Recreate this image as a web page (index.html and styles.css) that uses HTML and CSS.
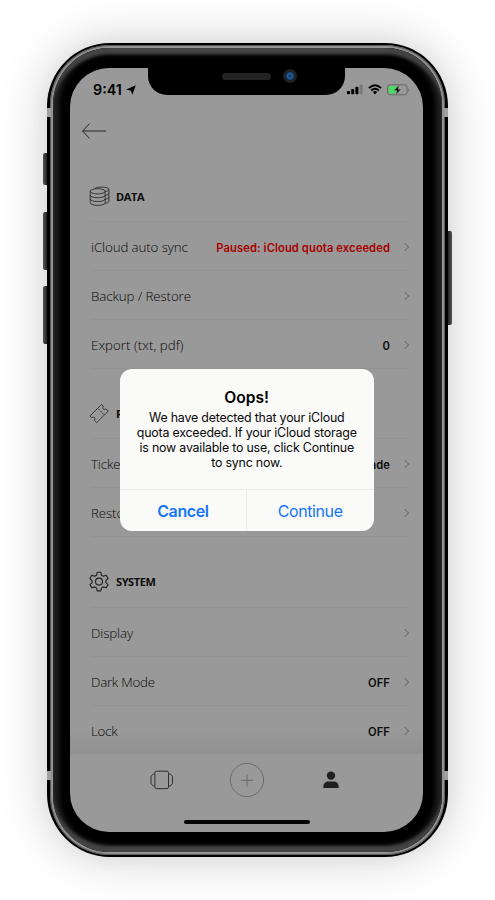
FILE: index.html
```html
<!DOCTYPE html>
<html lang="en">
<head>
<meta charset="utf-8">
<title>Settings</title>
<link rel="stylesheet" href="styles.css">
</head>
<body>
<div class="phone">
  <i class="key key-mute"></i><i class="key key-up"></i><i class="key key-down"></i><i class="key key-power"></i>
  <div class="rim"><div class="bezel"><div class="screen">
    <header class="status">
      <div class="clock"><span>9:41</span>
        <svg width="10" height="10" viewBox="0 0 10 10"><path d="M9.8.3 6.4 9.8 4.8 5.8.2 4.6z"/></svg>
      </div>
      <div class="signals">
        <svg width="16" height="11" viewBox="0 0 16 11"><rect y="7" width="3" height="3.3" rx=".8"/><rect x="4.2" y="5" width="3" height="5.3" rx=".8"/><rect x="8.4" y="2.8" width="3" height="7.5" rx=".8"/><rect x="12.6" y=".5" width="3" height="9.8" rx=".8" opacity=".2"/></svg>
        <svg width="14" height="11" viewBox="0 0 14 11" fill="none" stroke="#000" stroke-width="2"><path d="M.9 4.1Q7-1.7 13.1 4.1M3.2 6.4Q7 3 10.8 6.4"/><path d="M4.8 8Q7 6.2 9.2 8L7 10.5z" fill="#000" stroke="none"/></svg>
        <svg width="23" height="12" viewBox="0 0 23 12"><rect x=".5" y=".8" width="19.6" height="10" rx="2.6" fill="none" stroke="#666"/><path d="M21.4 4v3.8c1-.5 1.2-3 0-3.8z" fill="#666"/><rect x="1.8" y="2" width="8.5" height="7.6" rx="1.4" fill="#49d964"/><path d="M12.2.9 7 6.5h3L8.7 10.8 14 5.2h-3z" stroke="#999" stroke-width=".5"/></svg>
      </div>
    </header>
    <nav class="back"><svg width="24" height="16" viewBox="0 0 24 16"><path d="M7.5.5.7 8l6.8 7.5M.7 8H24"/></svg></nav>
    <main class="settings">
      <h2><svg width="21" height="21" viewBox="0 0 21 21"><ellipse cx="8.7" cy="5.3" rx="7.5" ry="2.6"/><path d="M1.2 5.3v11.4c0 3.6 15 3.6 15 0V5.3M1.2 9.1c0 3.5 15 3.5 15 0M1.2 12.9c0 3.5 15 3.5 15 0M5.5 3C7 .3 19.9.4 19.9 3.4c0 1-1.5 1.8-3.7 2.1M19.9 3.4v11.8c0 1-1.5 1.8-3.7 2.2M19.9 7.3c0 1-1.5 1.8-3.7 2.1M19.9 11.2c0 1-1.5 1.8-3.7 2.1"/></svg><span>DATA</span></h2>
      <div class="row"><span class="name">iCloud auto sync</span><b class="alerting">Paused: iCloud quota exceeded</b><i class="chev"></i></div>
      <div class="row"><span class="name">Backup / Restore</span><i class="chev"></i></div>
      <div class="row"><span class="name export">Export (txt, pdf)</span><b>0</b><i class="chev"></i></div>
      <h2><svg width="21" height="21" viewBox="0 0 21 21"><path d="M1 13 12.3 1.6l2 1.5c-1.2 2.8.2 4.2 2.7 2.8l2.3 2.2L7.7 19.6 5.5 17.5c1.2-2.8-.3-4.2-2.8-2.7z"/><path d="m9.3 5.8 6.2 6.4" stroke-dasharray="2 1"/></svg><span>P</span></h2>
      <div class="row"><span class="name">Tickets</span><b>Upgrade</b><i class="chev"></i></div>
      <div class="row"><span class="name">Restore</span><i class="chev"></i></div>
      <h2 class="system"><svg width="21" height="21" viewBox="0 0 21 21"><path d="M8.2 1.3h3.6l.7 3 1.7 1 3-1 1.9 3.2-2.2 2.1v2l2.2 2-1.9 3.2-3-.9-1.7 1-.7 3H8.2l-.7-3-1.7-1-3 .9-1.9-3.2 2.2-2v-2L.9 7.5l1.9-3.2 3 1 1.7-1z" stroke-linejoin="round" stroke-width="1.1"/><circle cx="10" cy="10.6" r="3.5" stroke-width="1.1"/></svg><span>SYSTEM</span></h2>
      <div class="row"><span class="name">Display</span><i class="chev"></i></div>
      <div class="row"><span class="name dark">Dark Mode</span><b>OFF</b><i class="chev"></i></div>
      <div class="row last"><span class="name dark">Lock</span><b>OFF</b><i class="chev"></i></div>
    </main>
    <footer class="tabs">
      <svg width="24" height="20" viewBox="0 0 24 20" fill="none" stroke="#303030"><rect x="4.9" y="1.2" width="13.6" height="17.4" rx="1.5"/><path d="M4.5 4H3.3L1 6.2v7.4L3.3 16h1.2M19 4h1.2l2.3 2.2v7.4L20.2 16H19"/></svg>
      <svg class="plus" width="36" height="36" viewBox="0 0 36 36" fill="none" stroke="#666"><circle cx="18" cy="18" r="16.6" stroke-width=".9"/><path d="M12 18.3h12M18 12.3v12"/></svg>
      <svg width="16" height="18" viewBox="0 0 16 18" fill="#202020"><circle cx="8" cy="4.6" r="4.2"/><path d="M.4 17v-1.8c0-3 2.5-4.8 4.5-4.8h6.2c2 0 4.5 1.8 4.5 4.8V17z"/></svg>
    </footer>
    <i class="home"></i>
    <div class="notch"><i class="speaker"></i><i class="camera"></i></div>
    <section class="dialog">
      <h1>Oops!</h1>
      <p><span>We have detected that your iCloud</span><span>quota exceeded. If your iCloud storage</span><span>is now available to use, click Continue</span><span>to sync now.</span></p>
      <div class="actions"><button class="strong">Cancel</button><button>Continue</button></div>
    </section>
  </div></div></div>
  <i class="band lt"></i><i class="band rt"></i><i class="band lb"></i><i class="band rb"></i>
</div>
</body>
</html>
```
FILE: styles.css
```css
* { box-sizing: border-box; }
body { margin: 0; height: 900px; padding: 43px 0 0 47px; background: #fff; overflow: hidden; font-family: Inter, "Liberation Sans", sans-serif; }
.phone { position: relative; width: 401px; height: 814px; padding: 2px 3px; border-radius: 63px; background: #000; box-shadow: 0 0 50px rgba(0,0,0,.2), 0 0 22px rgba(0,0,0,.04); }
.rim { height: 810px; padding: 3px; border-radius: 60px; background: #969696; box-shadow: inset 0 0 1px 1px #555; }
.bezel { height: 804px; padding: 20px 17px; border-radius: 57px; background: #000; box-shadow: inset 0 7px 3px -1px #444, inset 0 -7px 3px -1px #444, inset 0 0 5px 6px #202020; }
.screen { position: relative; display: flex; flex-direction: column; width: 353px; height: 764px; border-radius: 39px; overflow: hidden; background: #999; }
.key { position: absolute; left: -4px; width: 4px; border-radius: 2px 0 0 2px; background: linear-gradient(90deg, #555, #222); }
.key-mute { top: 110px; height: 32px; }
.key-up { top: 169px; height: 58px; }
.key-down { top: 243px; height: 58px; }
.key-power { left: 401px; top: 188px; height: 94px; border-radius: 0 2px 2px 0; background: linear-gradient(90deg, #222, #555); }
.band { position: absolute; width: 4px; height: 9px; background: #a0a0a0; }
.lt { left: 0; top: 65px; } .rt { right: 0; top: 65px; }
.lb { left: 0; bottom: 77px; } .rb { right: 0; bottom: 77px; }
.status { height: 43px; flex: none; display: flex; justify-content: space-between; padding: 0 13px 0 23px; align-items: center; }
.clock { display: flex; align-items: center; gap: 4px; font-size: 14.3px; font-weight: 600; }
.signals { display: flex; align-items: center; gap: 5px; }
.back { height: 41px; flex: none; padding: 12px 0 0 12px; }
.back svg { display: block; fill: none; stroke: #1c1c1c; stroke-width: .9; }
.settings { height: 601px; flex: none; padding: 0 15px 0 21px; overflow: hidden; background: linear-gradient(#999 96%, #919191); }
h2 { height: 70px; margin: 0; padding: 19px 0 0; display: flex; align-items: center; gap: 6px; border-bottom: 1px solid #939393; font: 700 11px "Open Sans", sans-serif; letter-spacing: -.4px; color: #0c0c0c; }
h2 svg { margin-left: -2px; fill: none; stroke: #202020; stroke-width: .8; }
.system { height: 71px; }
.row { height: 49px; display: flex; align-items: center; border-bottom: 1px solid #939393; padding-top: 2px; }
.name { margin-right: auto; font: 300 13.3px "Open Sans", sans-serif; letter-spacing: -.1px; color: #080808; white-space: nowrap; }
.export { letter-spacing: .05px; }
.dark { letter-spacing: -.25px; }
.row b { font-size: 11.2px; font-weight: 600; letter-spacing: .1px; color: #0c0c0c; white-space: nowrap; margin-right: 12px; padding-top: 1px; }
.row .alerting { color: #a80000; }
.chev { width: 6px; height: 6px; border: solid #707070; border-width: 1px 1px 0 0; transform: rotate(45deg); }
.tabs { height: 79px; flex: none; border-top: 1px solid #929292; display: flex; justify-content: space-between; align-items: center; padding: 0 84px 26px 80px; }
.plus { margin-left: -4px; }
.home { position: absolute; left: 114px; top: 752px; width: 126px; height: 4px; border-radius: 2px; background: #050505; }
.notch { position: absolute; top: 0; left: 78px; width: 197px; height: 27px; border-radius: 0 0 19px 19px; background: #000; }
.speaker { position: absolute; left: 74px; top: 5px; width: 49px; height: 7px; border-radius: 4px; background: #222; }
.camera { position: absolute; left: 135px; top: 1px; width: 14px; height: 14px; border-radius: 50%; background: radial-gradient(circle, #173a60 0 1px, #1f5c9c 2px 3px, #152b42 4px, #202020 5px); }
.dialog { position: absolute; left: 50px; top: 301px; width: 253.5px; height: 162px; border-radius: 12px; overflow: hidden; background: #fafaf9; display: flex; flex-direction: column; text-align: center; }
h1 { margin: 19px 0 2px; font-size: 15.6px; line-height: 20px; font-weight: 600; }
p { margin: 0; height: 79px; font-size: 12.4px; letter-spacing: -.2px; line-height: 15px; color: #080808; }
p span { display: block; white-space: nowrap; }
.actions { flex: 1; display: grid; grid-template-columns: 1fr 1fr; border-top: 1px solid #ececec; }
button { border: 0; padding: 0; background: none; color: #1476f5; font: 400 16px Inter, sans-serif; letter-spacing: -.4px; }
.strong { font-weight: 600; border-right: 1px solid #ececec; }
```
